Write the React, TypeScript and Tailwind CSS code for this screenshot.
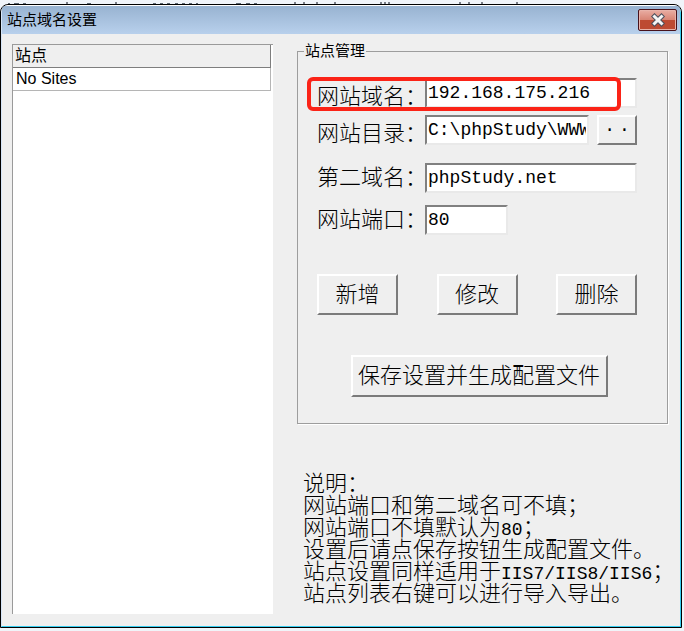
import type { ReactNode } from 'react';

const FIELD =
    "h-[30px] min-w-0 rounded-none bg-white px-px text-[18px] leading-none text-black outline-none border-2 border-t-[#808080] border-l-[#808080] border-r-[#e9e9e9] border-b-[#e9e9e9] font-['Liberation_Mono','Noto_Sans_CJK_SC',monospace]";

const BUTTON =
    "shrink-0 whitespace-nowrap rounded-none bg-[#efefef] text-[22px] font-light leading-none text-black border-2 border-t-white border-l-white border-r-[#7b7b7b] border-b-[#7b7b7b]";

function Latin({ children }: { children: ReactNode }) {
    return <span className="font-['Liberation_Mono',monospace] text-[18px] leading-none font-normal">{children}</span>;
}

function Label({ id, children }: { id: string; children: ReactNode }) {
    return (
        <label htmlFor={id} className="w-[108px] shrink-0 whitespace-nowrap text-[22px] font-light leading-[30px]">
            {children}
        </label>
    );
}

export default function App() {
    return (
        <div className="min-h-screen bg-[#f0f4f9] pr-[2px] pb-[2px] text-black font-['Liberation_Sans','Noto_Sans_CJK_SC',sans-serif]">
            {/* Tops of the letters of the window behind */}
            <svg className="block h-1 w-[682px]" viewBox="0 0 682 4" aria-hidden="true">
                <path
                    d="M8 3.5h2M14 3.5h5M23 3.5h3M87 3.5h4M153 3.5h3M160 3.5h3M167 3.5h3M175 3.5h3M182 3.5h3M189 3.5h3M196 3.5h2M236 3.5h5M246 3.5h4M254 3.5h3"
                    stroke="#5c6670"
                />
                <path
                    d="M67 2v2M116 2v2M295 2v2M304 2v2M317 2v2M335 2v2M381 2v2M385 2v2M389 2v2M460 2v2M469 2v2M482 2v2M517 2v2"
                    stroke="#7a7f88"
                    strokeWidth="2"
                />
            </svg>

            <main className="flex min-h-[624px] flex-col overflow-hidden rounded-t-lg border border-black bg-[#efefef]">
                <div className="flex grow flex-col rounded-t-lg border border-t-white border-l-[#d5e5f8] border-r-[#35cdf0] border-b-[#35cdf0]">
                    {/* Title bar */}
                    <header className="flex h-7 items-start justify-between bg-linear-to-b from-[#98b3d1] to-[#b8d0ec] pr-[3px] pl-[5px]">
                        <h1 className="text-[15px] leading-7">站点域名设置</h1>
                        <button
                            aria-label="关闭"
                            className="mt-[3px] flex h-[22px] w-[39px] items-center justify-center rounded-[2px] border border-[#47121c] bg-linear-to-b from-[#e9aea4] from-0% via-[#d98778] via-45% to-[#cf6a52] shadow-[inset_0_0_0_1px_#e8b3aa,inset_0_-10px_0_0_#bd4a32]"
                        >
                            <svg width="14" height="14" viewBox="0 0 14 14">
                                <path d="M3.5 3.5 L10.5 10.5 M10.5 3.5 L3.5 10.5" stroke="#4b4f5c" strokeWidth="5" strokeLinecap="square" />
                                <path d="M3.5 3.5 L10.5 10.5 M10.5 3.5 L3.5 10.5" stroke="#f5f5f5" strokeWidth="3" strokeLinecap="square" />
                            </svg>
                        </button>
                    </header>

                    <div className="flex grow gap-6 pt-[10px] pr-3 pb-3 pl-[10px]">
                        {/* Site list */}
                        <div className="flex w-[261px] shrink-0 flex-col border-t border-l border-[#9a9a9a] bg-white pr-[2px]">
                            <table className="w-full border-collapse text-left text-[16px] leading-[22px]">
                                <thead>
                                    <tr>
                                        <th className="border-r border-b border-[#7e7e7e] bg-[#efefef] px-[2px] font-normal">站点</th>
                                    </tr>
                                </thead>
                                <tbody>
                                    <tr>
                                        <td className="border-r border-b border-[#b5b5b5] px-[3px]">No Sites</td>
                                    </tr>
                                </tbody>
                            </table>
                        </div>

                        <div className="min-w-0 flex-1">
                            <fieldset className="min-w-0 border border-[#9d9d9d] pt-5 pr-[30px] pb-[26px] pl-[19px] shadow-[1px_1px_0_0_#ffffff]">
                                <legend className="-ml-[13px] px-px text-[15px] leading-[14px]">站点管理</legend>

                                <div className="flex flex-col gap-[3px]">
                                    <div className="relative flex items-start">
                                        <div className="w-[108px] shrink-0 pt-1">
                                            <Label id="domain">网站域名：</Label>
                                        </div>
                                        <input id="domain" className={`${FIELD} flex-1`} defaultValue="192.168.175.216" />
                                        {/* Red highlight over the domain row */}
                                        <div className="pointer-events-none absolute -top-px right-4 -left-[10px] h-[34px] rounded-md border-4 border-[#fb2317]" />
                                    </div>
                                    <div className="flex items-start">
                                        <div className="w-[108px] shrink-0 pt-1">
                                            <Label id="folder">网站目录：</Label>
                                        </div>
                                        <input id="folder" className={`${FIELD} flex-1`} defaultValue="C:\phpStudy\WWW" />
                                        <button aria-label="浏览" className={`${BUTTON} ml-2 flex h-[30px] w-10 items-center justify-center gap-1`}>
                                            <Latin>·</Latin>
                                            <Latin>·</Latin>
                                        </button>
                                    </div>
                                </div>

                                <div className="mt-[14px] flex flex-col gap-3">
                                    <div className="flex">
                                        <Label id="second">第二域名：</Label>
                                        <input id="second" className={`${FIELD} flex-1`} defaultValue="phpStudy.net" />
                                    </div>
                                    <div className="flex">
                                        <Label id="port">网站端口：</Label>
                                        <input id="port" className={`${FIELD} w-[83px]`} defaultValue="80" />
                                    </div>
                                </div>

                                <div className="mt-[39px] flex justify-between">
                                    <button className={`${BUTTON} h-[41px] w-[81px]`}>新增</button>
                                    <button className={`${BUTTON} h-[41px] w-[81px]`}>修改</button>
                                    <button className={`${BUTTON} h-[41px] w-[81px]`}>删除</button>
                                </div>

                                <div className="mt-10 flex justify-center pl-1">
                                    <button className={`${BUTTON} h-[42px] w-[257px]`}>保存设置并生成配置文件</button>
                                </div>
                            </fieldset>

                            {/* Notes */}
                            <div className="mt-[49px] pl-[6px] text-[22px] font-light leading-[22px] whitespace-nowrap">
                                <p>说明：</p>
                                <p>网站端口和第二域名可不填；</p>
                                <p>
                                    网站端口不填默认为<Latin>80</Latin>；
                                </p>
                                <p>设置后请点保存按钮生成配置文件。</p>
                                <p>
                                    站点设置同样适用于<Latin>IIS7/IIS8/IIS6</Latin>；
                                </p>
                                <p>站点列表右键可以进行导入导出。</p>
                            </div>
                        </div>
                    </div>
                </div>
            </main>
        </div>
    );
}
